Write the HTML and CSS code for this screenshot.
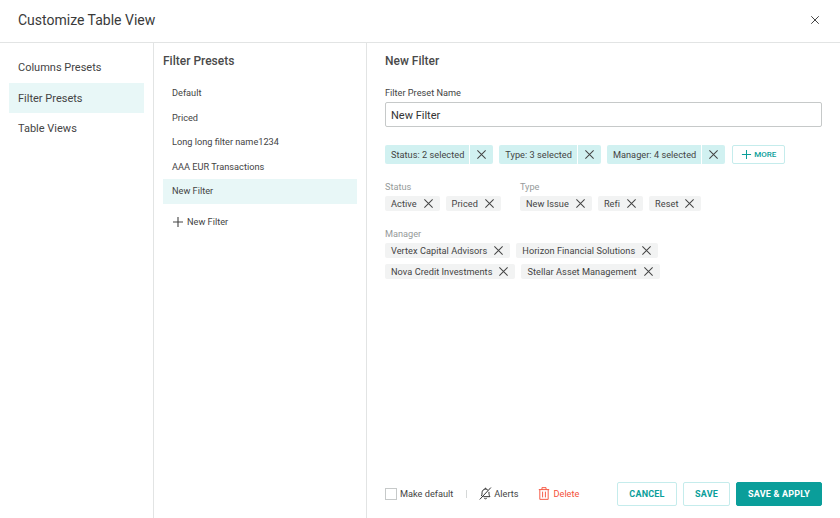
FILE: index.html
```html
<!DOCTYPE html>
<html lang="en">
<head>
    <meta charset="UTF-8">
    <title>Customize Table View</title>
    <link rel="stylesheet" href="styles.css">
</head>
<body>

<svg class="icon-defs" width="0" height="0">
    <symbol id="x" viewBox="0 0 12 12">
        <path d="M1.5 1.5 10.5 10.5M10.5 1.5 1.5 10.5" fill="none" stroke="currentColor" stroke-width="1.1"/>
    </symbol>
    <symbol id="plus" viewBox="0 0 12 12">
        <path d="M6 1V11M1 6H11" fill="none" stroke="currentColor" stroke-width="1.1"/>
    </symbol>
</svg>

<div class="dialog">
    <div class="header">
        <div class="header-title">Customize Table View</div>
        <svg class="close"><use href="#x"/></svg>
    </div>
    <div class="columns">
        <div class="nav">
            <div class="nav-item">Columns Presets</div>
            <div class="nav-item active">Filter Presets</div>
            <div class="nav-item">Table Views</div>
        </div>
        <div class="presets">
            <div class="presets-title">Filter Presets</div>
            <div class="preset">Default</div>
            <div class="preset">Priced</div>
            <div class="preset">Long long filter name1234</div>
            <div class="preset">AAA EUR Transactions</div>
            <div class="preset active">New Filter</div>
            <div class="add-preset"><svg class="add-icon"><use href="#plus"/></svg>New Filter</div>
        </div>
        <div class="editor">
            <div class="editor-title">New Filter</div>
            <label class="field-label" for="name">Filter Preset Name</label>
            <input id="name" class="name-input" type="text" value="New Filter">

            <div class="summary">
                <div class="summary-chip"><span class="summary-text">Status: 2 selected</span><span class="summary-x"><svg class="x"><use href="#x"/></svg></span></div>
                <div class="summary-chip"><span class="summary-text">Type: 3 selected</span><span class="summary-x"><svg class="x"><use href="#x"/></svg></span></div>
                <div class="summary-chip"><span class="summary-text">Manager: 4 selected</span><span class="summary-x"><svg class="x"><use href="#x"/></svg></span></div>
                <button class="more"><svg class="more-icon"><use href="#plus"/></svg>MORE</button>
            </div>

            <div class="groups">
                <div class="group">
                    <div class="group-label">Status</div>
                    <div class="chips">
                        <span class="chip">Active<svg class="x"><use href="#x"/></svg></span>
                        <span class="chip">Priced<svg class="x"><use href="#x"/></svg></span>
                    </div>
                </div>
                <div class="group">
                    <div class="group-label">Type</div>
                    <div class="chips">
                        <span class="chip">New Issue<svg class="x"><use href="#x"/></svg></span>
                        <span class="chip">Refi<svg class="x"><use href="#x"/></svg></span>
                        <span class="chip">Reset<svg class="x"><use href="#x"/></svg></span>
                    </div>
                </div>
            </div>

            <div class="group manager">
                <div class="group-label">Manager</div>
                <div class="chips">
                    <span class="chip">Vertex Capital Advisors<svg class="x"><use href="#x"/></svg></span>
                    <span class="chip">Horizon Financial Solutions<svg class="x"><use href="#x"/></svg></span>
                </div>
                <div class="chips">
                    <span class="chip">Nova Credit Investments<svg class="x"><use href="#x"/></svg></span>
                    <span class="chip">Stellar Asset Management<svg class="x"><use href="#x"/></svg></span>
                </div>
            </div>

            <div class="footer">
                <span class="checkbox"></span>
                <span class="make-default">Make default</span>
                <span class="divider"></span>
                <span class="alerts">
                    <svg class="bell" viewBox="0 0 14 14"><path d="M2.6 9.8C3.3 8.6 3.3 7.2 3.3 5.9 3.3 3.9 4.9 2.3 7 2.3 8 2.3 8.9 2.7 9.6 3.4M10.7 5.2C10.7 7.2 10.8 8.8 11.8 10.4H4.6M5.6 12C6.2 12.9 7.8 12.9 8.4 12M.8 13.4 12.8.6M6.2 2.3C6.2 1 7.8 1 7.8 2.3" fill="none" stroke="#222" stroke-width="1"/></svg>
                    Alerts
                </span>
                <span class="delete">
                    <svg class="trash" viewBox="0 0 12 14"><path d="M.4 2.8H11.6M3.8 2.8V.7H8.2V2.8M1.5 2.8V13.3H10.5V2.8M4.5 5V11.2M7.5 5V11.2" fill="none" stroke="#f5503a" stroke-width="1"/></svg>
                    Delete
                </span>
                <div class="actions">
                    <button class="btn cancel">CANCEL</button>
                    <button class="btn save">SAVE</button>
                    <button class="btn apply">SAVE &amp; APPLY</button>
                </div>
            </div>
        </div>
    </div>
</div>

</body>
</html>
```

FILE: styles.css
```css
* {
    box-sizing: border-box;
}
body {
    font-family: Roboto, "Liberation Sans", sans-serif;
    color: #444;
    background-color: #fff;
    margin: 0;
    height: 518px;
    overflow: hidden;
}
.icon-defs {
    position: absolute;
}
.dialog {
    height: 518px;
    display: flex;
    flex-direction: column;
}
.header {
    height: 43px;
    flex: none;
    display: flex;
    justify-content: space-between;
    align-items: center;
    padding: 0 20px 2px 18px;
    border-bottom: 1px solid #e2e4e4;
}
.header-title {
    font-size: 14px;
    font-weight: 400;
    color: #3a3a3a;
}
.close {
    width: 10px;
    height: 10px;
    color: #333;
}
.columns {
    flex: 1;
    display: flex;
    min-height: 0;
}
.nav {
    width: 154px;
    flex: none;
    padding: 9px 9px 0;
    border-right: 1px solid #e2e4e4;
}
.nav-item {
    height: 30.5px;
    padding-left: 9px;
    font-size: 11px;
    line-height: 31px;
}
.nav-item.active {
    background-color: #e8f7f7;
}
.presets {
    width: 213px;
    flex: none;
    padding: 0 9px;
    border-right: 1px solid #e2e4e4;
}
.presets-title {
    height: 38px;
    padding-top: 11px;
    font-size: 12px;
    font-weight: 500;
    color: #4a4a4a;
}
.preset {
    height: 24.5px;
    padding-left: 9px;
    font-size: 9.2px;
    line-height: 24.5px;
}
.preset.active {
    background-color: #e8f7f7;
}
.add-preset {
    display: flex;
    align-items: center;
    margin-top: 12px;
    padding-left: 9px;
    font-size: 9.2px;
}
.add-icon {
    width: 12px;
    height: 12px;
    margin-right: 3px;
}
.editor {
    flex: 1;
    min-width: 0;
    padding: 0 18px;
    display: flex;
    flex-direction: column;
}
.editor-title {
    height: 44px;
    padding-top: 11px;
    font-size: 12px;
    font-weight: 500;
    color: #4a4a4a;
}
.field-label {
    font-size: 9.2px;
    line-height: 12px;
}
.name-input {
    display: block;
    flex: none;
    width: 100%;
    height: 25px;
    margin-top: 3px;
    padding: 1px 5px 0;
    border: 1px solid #c6c9c9;
    border-radius: 2px;
    color: #333;
    font-family: inherit;
    font-size: 11px;
}
.summary {
    display: flex;
    align-items: center;
    gap: 6px;
    margin-top: 18px;
}
.summary-chip {
    height: 19px;
    display: flex;
    background-color: #d1f1f1;
    border-radius: 2px;
    font-size: 9.2px;
    line-height: 19px;
    letter-spacing: 0.03px;
}
.summary-text {
    padding: 0 5px 0 6px;
    border-right: 1px solid #fff;
}
.summary-x {
    width: 23px;
    display: flex;
    align-items: center;
    justify-content: center;
}
.x {
    width: 11px;
    height: 11px;
    flex: none;
}
.more {
    width: 53px;
    height: 19px;
    display: flex;
    align-items: center;
    justify-content: center;
    margin-left: 1px;
    padding: 0;
    background-color: #fff;
    border: 1px solid #c5ecec;
    border-radius: 2px;
    color: #0a9e9a;
    font-family: inherit;
    font-size: 8px;
    font-weight: 500;
}
.more-icon {
    width: 11px;
    height: 11px;
    margin-right: 2px;
}
.groups {
    display: flex;
    gap: 19px;
    margin-top: 17px;
}
.group-label {
    color: #969a9a;
    font-size: 9.2px;
    line-height: 12px;
}
.chips {
    display: flex;
    gap: 6px;
    margin-top: 3px;
}
.chip {
    height: 15px;
    display: flex;
    align-items: center;
    gap: 6px;
    padding: 0 6px;
    background-color: #f2f3f3;
    border-radius: 2px;
    font-size: 9.2px;
    letter-spacing: 0.05px;
}
.manager {
    margin-top: 17px;
}
.manager .chips + .chips {
    margin-top: 6px;
}
.footer {
    margin-top: auto;
    height: 48px;
    flex: none;
    display: flex;
    align-items: center;
    padding-bottom: 1px;
    font-size: 9.2px;
}
.checkbox {
    width: 12px;
    height: 12px;
    border: 1px solid #c6c9c9;
    margin-right: 3px;
}
.divider {
    width: 1px;
    height: 8px;
    margin: 0 12px 0 13px;
    background-color: #d5d8d8;
}
.alerts {
    display: flex;
    align-items: center;
    gap: 2px;
}
.bell {
    width: 13px;
    height: 13px;
}
.delete {
    display: flex;
    align-items: center;
    gap: 3px;
    margin-left: 20px;
    color: #f5503a;
}
.trash {
    width: 12px;
    height: 13px;
}
.actions {
    display: flex;
    gap: 6px;
    margin-left: auto;
}
.btn {
    height: 24px;
    padding: 0;
    border: 1px solid #c5ecec;
    border-radius: 2px;
    background-color: #fff;
    color: #0a9e9a;
    font-family: inherit;
    font-size: 9px;
    font-weight: 700;
    letter-spacing: 0.2px;
}
.cancel {
    width: 60px;
}
.save {
    width: 47px;
}
.apply {
    width: 86px;
    background-color: #0a9e9a;
    border-color: #0a9e9a;
    color: #fff;
}
```
